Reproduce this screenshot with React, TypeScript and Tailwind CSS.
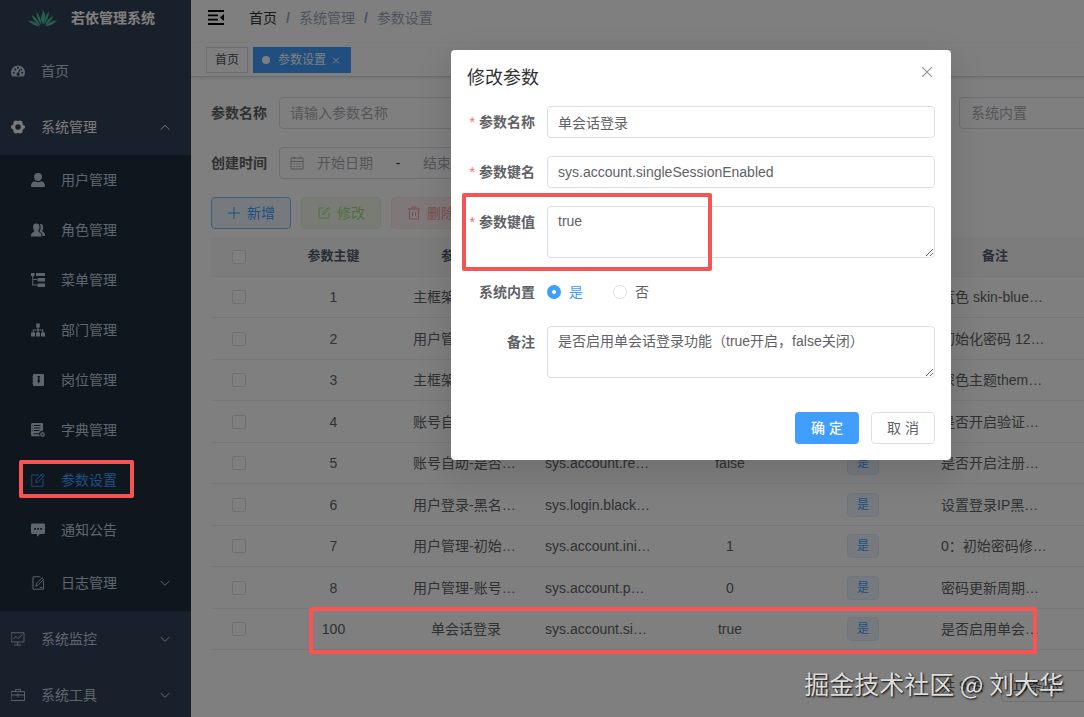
import type { ReactNode } from "react";

type MenuItem = {
  label: string;
  icon: ReactNode;
  active?: boolean;
  arrow?: boolean;
};

type ConfigRow = {
  id: number;
  name: string;
  configKey: string;
  value: string;
  remark: string;
};

function SolidIcon({ children }: { children: ReactNode }) {
  return (
    <svg viewBox="0 0 28 28" className="h-3.5 w-3.5 shrink-0" fill="currentColor" aria-hidden="true">
      {children}
    </svg>
  );
}

function LineIcon({ children }: { children: ReactNode }) {
  return (
    <svg
      viewBox="0 0 28 28"
      className="h-3.5 w-3.5 shrink-0"
      fill="none"
      stroke="currentColor"
      strokeWidth="1.800"
      strokeLinejoin="round"
      strokeLinecap="round"
      aria-hidden="true"
    >
      {children}
    </svg>
  );
}

const dashboardIcon = (
  <SolidIcon>
    <path
      fillRule="evenodd"
      d="M14 3c7.700 0 14 6.300 14 14 0 2.700-.7 5-2 7.200-.4.600-.8.800-1.500.8h-21c-.7 0-1.100-.2-1.500-.8C.7 22 0 19.700 0 17 0 9.300 6.300 3 14 3zM5.500 15.500a2 2 0 100 4 2 2 0 000-4zm3-6.500a2 2 0 100 4 2 2 0 000-4zM14 5.500a2 2 0 100 4 2 2 0 000-4zm8.500 10a2 2 0 100 4 2 2 0 000-4zM16.500 10l-2.200 7.200a3.200 3.200 0 101.900.6l2.200-7.200zM20.500 9.500a1.800 1.800 0 100 3.600 1.800 1.800 0 000-3.600z"
    />
  </SolidIcon>
);

const systemIcon = (
  <SolidIcon>
    <path
      fillRule="evenodd"
      d="M9.500 1c1.500-.8 2.500 1 4.500 1s3-1.800 4.500-1c2 .8 4.500 2 4.700 3.500.2 1.700-.5 3 .6 4.700 1 1.700 3.200 1.300 3.800 2.800.5 1.300.5 2.700 0 4-.6 1.500-2.800 1.100-3.800 2.800-1.100 1.700-.4 3-.6 4.700-.2 1.500-2.700 2.700-4.700 3.500-1.500.8-2.500-1-4.500-1s-3 1.800-4.500 1c-2-.8-4.500-2-4.700-3.500-.2-1.700.5-3-.6-4.700-1-1.700-3.200-1.300-3.800-2.800-.5-1.300-.5-2.700 0-4 .6-1.500 2.800-1.100 3.800-2.800 1.100-1.700.4-3 .6-4.700C5 3 7.500 1.800 9.500 1zM14 8.500a5.500 5.500 0 100 11 5.500 5.500 0 000-11z"
    />
  </SolidIcon>
);

const userIcon = (
  <SolidIcon>
    <path d="M14 0c5 0 8 3 8 7.500S18.500 16 14 16 6 12 6 7.500 9 0 14 0z" />
    <path d="M8 16.500c4 2.400 8 2.400 12 0 5 1 8 4.500 8 9 0 1.700-.8 2.500-2.500 2.500h-23C.8 28 0 27.200 0 25.500c0-4.500 3-8 8-9z" />
  </SolidIcon>
);

const peoplesIcon = (
  <SolidIcon>
    <path d="M10.500 1C15 1 17 4 17 8c0 3-1 5.500-2.500 7.500 0 2 1 2.500 3 3.500 2.500 1.200 3.500 3 3.500 8H0c0-5 1-6.800 3.500-8 2-1 3-1.500 3-3.500C5 13.500 4 11 4 8c0-4 2-7 6.500-7z" />
    <path d="M17 2.200c4.500-1 7.500 1.600 7.500 6.300 0 2.500-.8 4.600-2.200 6.500 0 1.800.8 2.400 2.200 3.200 2.500 1.300 3.500 3 3.500 7.800h-4.800c-.2-4.500-1.700-6.500-4.700-8-1.500-.7-1.700-1.200-1-2.500 1.500-2.300 2.200-4.800 2-7.500-.1-2.300-.9-4.300-2.500-5.800z" />
  </SolidIcon>
);

const treeTableIcon = (
  <SolidIcon>
    <path d="M0 0h7v6H4.500v6H12v2H4.500v9H12v2H2.500V6H0z" />
    <path d="M10 0h18v6H10zM13 10h15v7H13zM13 21h15v7H13z" />
  </SolidIcon>
);

const treeIcon = (
  <SolidIcon>
    <path d="M10.500 1h7v8H15v4h9.500v6H28v8h-8v-8h2.500v-4H15v4h3v8h-8v-8h3v-4H5.500v4H8v8H0v-8h3.500v-6H13V9h-2.500z" />
  </SolidIcon>
);

const postIcon = (
  <SolidIcon>
    <path
      fillRule="evenodd"
      d="M6 2h18c1.200 0 2 .8 2 2v20c0 1.200-.8 2-2 2H6c-1.200 0-2-.8-2-2v-3H2.500v-2H4v-4H2.500v-2H4V9H2.500V7H4V4c0-1.200.8-2 2-2zm7 4v3h1.500l-1.500 8 2.500 4 2.500-4-1.500-8H18V6z"
    />
  </SolidIcon>
);

const dictIcon = (
  <SolidIcon>
    <path
      fillRule="evenodd"
      d="M3 0h19c1.200 0 2 .8 2 2v13.500c-3.500-.8-7 1.500-7.800 5H5v2h11.200c.3 1.600 1 3 2 4H3c-1.700 0-3-1.300-3-3V3c0-1.700 1.300-3 3-3zm3 4v2h13V4zm0 5v2h13V9zm0 5v2h11v-2zM1.500 5v1.500h2V5zm0 5v1.500h2V10zm0 5v1.500h2V15z"
    />
    <path
      fillRule="evenodd"
      d="M23 17.500l1.500 1.500 2.200.3.300 2.200 1 1.500-1 1.500-.3 2.200-2.200.3L23 28l-1.500-1-2.200-.3-.3-2.200-1-1.500 1-1.500.3-2.200 2.200-.3zm0 3.500a2 2 0 100 4 2 2 0 000-4z"
    />
  </SolidIcon>
);

const editIcon = (
  <LineIcon>
    <path d="M15 4H1.500v22.500h22.500V13" />
    <path d="M9.500 18.500l1.200-5.500L23 1.200 27.200 5.500 15 17.200zM20 4l4.500 4.500" />
  </LineIcon>
);

const messageIcon = (
  <SolidIcon>
    <path
      fillRule="evenodd"
      d="M3 1h22c1.700 0 3 1.300 3 3v15c0 1.700-1.300 3-3 3h-7l-6 5.500V22H3c-1.700 0-3-1.300-3-3V4c0-1.700 1.300-3 3-3zm3.500 9v3.500H10V10zm6 0v3.500H16V10zm6 0v3.500H22V10z"
    />
  </SolidIcon>
);

const logIcon = (
  <LineIcon>
    <path d="M18 1.500H4v3M4 8v2.500M4 14v2.500M4 20v6.500h21V10M2.500 6.200h3M2.500 12.200h3M2.500 18.200h3" />
    <path d="M10 20l1.200-5.500L22 3.500l3.200 3L14.500 18zM18 23h4" />
  </LineIcon>
);

const monitorIcon = (
  <LineIcon>
    <path d="M1 1.500h25v18.500H1zM13.500 20v6M7 26h13" />
    <path d="M5 13l5-4 4 4 8-7" />
  </LineIcon>
);

const toolIcon = (
  <LineIcon>
    <path d="M1 7h26v18H1zM9 7V3h10v4M1 14h10M17 14h10M14 11.500v6M11.500 14h5" />
  </LineIcon>
);

const topMenu: MenuItem[] = [{ label: "首页", icon: dashboardIcon }];

const systemMenu: MenuItem[] = [
  { label: "用户管理", icon: userIcon },
  { label: "角色管理", icon: peoplesIcon },
  { label: "菜单管理", icon: treeTableIcon },
  { label: "部门管理", icon: treeIcon },
  { label: "岗位管理", icon: postIcon },
  { label: "字典管理", icon: dictIcon },
  { label: "参数设置", icon: editIcon, active: true },
  { label: "通知公告", icon: messageIcon },
];

const bottomMenu: MenuItem[] = [
  { label: "系统监控", icon: monitorIcon, arrow: true },
  { label: "系统工具", icon: toolIcon, arrow: true },
];

const rows: ConfigRow[] = [
  { id: 1, name: "主框架页-默认皮肤样式名称", configKey: "sys.index.skinName", value: "skin-blue", remark: "蓝色 skin-blue、绿色 skin-green" },
  { id: 2, name: "用户管理-账号初始密码", configKey: "sys.user.initPassword", value: "123456", remark: "初始化密码 123456" },
  { id: 3, name: "主框架页-侧边栏主题", configKey: "sys.index.sideTheme", value: "theme-dark", remark: "深色主题theme-dark" },
  { id: 4, name: "账号自助-验证码开关", configKey: "sys.account.captchaEnabled", value: "true", remark: "是否开启验证码功能" },
  { id: 5, name: "账号自助-是否开启用户注册功能", configKey: "sys.account.registerUser", value: "false", remark: "是否开启注册用户功能" },
  { id: 6, name: "用户登录-黑名单列表", configKey: "sys.login.blackIPList", value: "", remark: "设置登录IP黑名单限制" },
  { id: 7, name: "用户管理-初始密码修改策略", configKey: "sys.account.initPasswordModify", value: "1", remark: "0：初始密码修改策略关闭" },
  { id: 8, name: "用户管理-账号密码更新周期", configKey: "sys.account.passwordValidateDays", value: "0", remark: "密码更新周期（填写数字）" },
  { id: 100, name: "单会话登录", configKey: "sys.account.singleSessionEnabled", value: "true", remark: "是否启用单会话登录功能" },
];

function Arrow({ up = false }: { up?: boolean }) {
  return (
    <svg
      viewBox="0 0 12 12"
      className="ml-auto h-3 w-3 shrink-0"
      fill="none"
      stroke="currentColor"
      strokeWidth="1"
      strokeLinecap="round"
      aria-hidden="true"
    >
      <path d={up ? "M2 8.300 6 4.300l4 4" : "M2 4.300 6 8.300l4-4"} />
    </svg>
  );
}

function MenuLink({ item }: { item: MenuItem }) {
  return (
    <a href="#" className="flex h-14 items-center gap-4 pr-5 pl-[11px]">
      {item.icon}
      <span>{item.label}</span>
      {item.arrow && <Arrow />}
    </a>
  );
}

function Sidebar() {
  return (
    <aside className="w-[191px] shrink-0 bg-[#304156] text-sm text-[#bfcbd9]">
      <div className="flex h-[43px] items-center gap-3.5 pb-[7px] pl-7">
        <svg viewBox="0 0 58 36" className="h-[18px] w-[29px]" fill="#4dbb9b" aria-hidden="true">
          <path d="M28 0c8 8 8 19 2 31-5-10-5-15-2-20 2-4 2-7 0-11z" />
          <path d="M17 6c6 6 9 14 10 26C20 23 17 15 17 6zM42 5c-6 6-9 14-10 26C39 23 42 15 42 5z" />
          <path d="M7 12c8 4 14 11 18 22C16 28 10 21 7 12zM51 13c-8 4-13 10-17 20 9-5 14-11 17-20z" />
          <path d="M0 23c9 0 18 4 24 12C14 34 7 30 0 23zM58 23c-9 0-17 4-23 11 10 0 16-4 23-11z" />
        </svg>
        <h1 className="font-bold text-white">若依管理系统</h1>
      </div>
      <nav>
        {topMenu.map((item) => (
          <MenuLink key={item.label} item={item} />
        ))}
        <a href="#" className="flex h-14 items-center gap-4 pr-5 pl-[11px] text-[#f4f4f5]">
          {systemIcon}
          <span>系统管理</span>
          <Arrow up />
        </a>
        <div className="bg-[#1f2d3d]">
          {systemMenu.map((item) => (
            <a
              key={item.label}
              href="#"
              className={
                item.active
                  ? "relative flex h-[50px] items-center gap-4 pl-[31px] text-[#409eff]"
                  : "flex h-[50px] items-center gap-4 pl-[31px]"
              }
            >
              {item.icon}
              <span>{item.label}</span>
              {item.active && (
                <span className="absolute top-[5px] left-[19px] z-20 h-[38px] w-[115px] rounded-xs border-4 border-[#f95353]" />
              )}
            </a>
          ))}
          <a href="#" className="flex h-14 items-center gap-4 pr-5 pl-[31px]">
            {logIcon}
            <span>日志管理</span>
            <Arrow />
          </a>
        </div>
        {bottomMenu.map((item) => (
          <MenuLink key={item.label} item={item} />
        ))}
      </nav>
    </aside>
  );
}

function Navbar() {
  return (
    <header>
      <div className="flex h-[43px] items-center gap-6 pr-4 pb-[7px] pl-4 text-sm">
        <button type="button" aria-label="收起菜单" className="text-black">
          <svg viewBox="0 0 18 16" className="h-4 w-[18px]" fill="currentColor" aria-hidden="true">
            <path d="M1 0h16v2H1zM1 4.400h10v1.800H1zM1 8.800h10v1.800H1zM1 13h16v2H1zM17 4v7l-4-3.500z" />
          </svg>
        </button>
        <nav className="flex items-center text-[#97a8be]">
          <a href="#" className="text-[#303133]">首页</a>
          <span className="mx-[9px] font-bold">/</span>
          <span>系统管理</span>
          <span className="mx-[9px] font-bold">/</span>
          <span>参数设置</span>
        </nav>
      </div>
      <div className="flex h-[34px] gap-[5px] border-b border-[#d8dce5] pt-1 pl-[15px] text-xs shadow-[0_1px_3px_rgba(0,0,0,0.12)]">
        <a href="#" className="flex h-[26px] items-center border border-[#d8dce5] px-2 text-[#495060]">
          首页
        </a>
        <a href="#" className="flex h-[26px] items-center border border-[#409eff] bg-[#409eff] px-2 text-white">
          <span className="mr-2 h-2 w-2 rounded-full bg-white" />
          参数设置
          <svg viewBox="0 0 12 12" className="ml-1 h-3 w-3" stroke="currentColor" strokeWidth="1" aria-hidden="true">
            <path d="M3 3.500l6 6M9 3.500l-6 6" />
          </svg>
        </a>
      </div>
    </header>
  );
}

function QueryForm() {
  const label = "w-[68px] shrink-0 text-sm font-bold text-[#606266]";
  const field =
    "h-8 w-60 shrink-0 rounded border border-[#dcdfe6] bg-white px-2.5 text-sm text-[#606266] placeholder:text-[#a8abb2]";

  return (
    <form className="flex flex-col gap-[18px]">
      <div className="flex items-center">
        <label htmlFor="q-name" className={label}>参数名称</label>
        <input id="q-name" placeholder="请输入参数名称" className={field + " mr-8"} />
        <label htmlFor="q-key" className={label}>参数键名</label>
        <input id="q-key" placeholder="请输入参数键名" className={field + " mr-8"} />
        <label htmlFor="q-type" className={label}>系统内置</label>
        <select
          id="q-type"
          className="h-8 w-60 shrink-0 appearance-none rounded border border-[#dcdfe6] bg-white px-[11px] text-sm text-[#a8abb2]"
        >
          <option>系统内置</option>
        </select>
      </div>
      <div className="flex items-center">
        <label htmlFor="q-begin" className={label}>创建时间</label>
        <div className="flex h-8 w-60 shrink-0 items-center rounded border border-[#dcdfe6] bg-white pl-2.5 text-sm text-[#a8abb2]">
          <svg viewBox="0 0 28 28" className="h-3.5 w-3.5 shrink-0" fill="none" stroke="currentColor" strokeWidth="2" aria-hidden="true">
            <path d="M2 4h24v22H2zM2 11h24M8 1v5M20 1v5" />
            <path d="M7 16h3M12.500 16h3M18 16h3M7 21h3M12.500 21h3M18 21h3" />
          </svg>
          <input id="q-begin" placeholder="开始日期" className="w-[82px] text-center placeholder:text-[#a8abb2]" />
          <span className="w-6 text-center text-[#303133]">-</span>
          <input aria-label="结束日期" placeholder="结束日期" className="w-[82px] text-center placeholder:text-[#a8abb2]" />
        </div>
      </div>
    </form>
  );
}

function Toolbar() {
  const button = "flex h-8 w-20 items-center justify-center gap-1.5 rounded border text-sm";

  return (
    <div className="mt-[18px] mb-2 flex gap-2.5">
      <button type="button" className={button + " border-[#79bbff] bg-[#ecf5ff] text-[#409eff]"}>
        <svg viewBox="0 0 14 14" className="h-3.5 w-3.5" stroke="currentColor" strokeWidth="1" aria-hidden="true">
          <path d="M1 7h12M7 1v12" />
        </svg>
        新增
      </button>
      <button type="button" disabled className={button + " border-[#e1f3d8] bg-[#f0f9eb] text-[#a4da89]"}>
        <svg viewBox="0 0 28 28" className="h-3.5 w-3.5" fill="none" stroke="currentColor" strokeWidth="2" aria-hidden="true">
          <path d="M15 4H4v20h20V13M11 17l1-4L23 3l2 2-10 11z" />
        </svg>
        修改
      </button>
      <button type="button" disabled className={button + " border-[#fde2e2] bg-[#fef0f0] text-[#f79e9e]"}>
        <svg viewBox="0 0 28 28" className="h-3.5 w-3.5" fill="none" stroke="currentColor" strokeWidth="2" aria-hidden="true">
          <path d="M2 6h24M5 6v20h18V6M10 6V2h8v4M11 12v8M17 12v8" />
        </svg>
        删除
      </button>
    </div>
  );
}

function ConfigTable() {
  const checkbox = "mx-auto block h-3.5 w-3.5 appearance-none rounded-xs border border-[#dcdfe6] bg-white";
  const cell = "truncate pr-3.5 pl-3";

  return (
    <table className="w-full table-fixed border-separate border-spacing-0 text-center text-sm text-[#606266]">
      <colgroup>
        <col className="w-[55px]" />
        <col className="w-[135px]" />
        <col className="w-[132px]" />
        <col className="w-[132px]" />
        <col className="w-[132px]" />
        <col className="w-[132px]" />
        <col className="w-[132px]" />
        <col />
      </colgroup>
      <thead>
        <tr className="h-10 text-[13px] text-[#515a6e] *:border-b *:border-[#ebeef5] *:bg-[#f8f8f9]">
          <th>
            <input type="checkbox" aria-label="全选" className={checkbox} />
          </th>
          <th>参数主键</th>
          <th>参数名称</th>
          <th>参数键名</th>
          <th>参数键值</th>
          <th>系统内置</th>
          <th>备注</th>
          <td />
        </tr>
      </thead>
      <tbody>
        {rows.map((row) => (
          <tr key={row.id} className="relative h-[41px] *:border-b *:border-[#ebeef5] even:h-[42px]">
            <td>
              <input type="checkbox" aria-label={"选择 " + row.id} className={checkbox} />
              {row.id === 100 && (
                <span className="absolute -top-0.5 left-[98px] z-20 h-[47px] w-[728px] rounded-xs border-4 border-[#f95353]" />
              )}
            </td>
            <td>{row.id}</td>
            <td className={cell}>{row.name}</td>
            <td className={cell}>{row.configKey}</td>
            <td className={cell}>{row.value}</td>
            <td>
              <span className="mx-auto flex h-6 w-8 items-center justify-center rounded border border-[#d9ecff] bg-[#ecf5ff] text-xs text-[#409eff]">
                是
              </span>
            </td>
            <td className={cell}>{row.remark}</td>
            <td />
          </tr>
        ))}
      </tbody>
    </table>
  );
}

function EditDialog() {
  const label = "w-20 shrink-0 pr-3 text-right leading-8 font-bold";
  const star = <span className="mr-1 font-normal text-[#f56c6c]">*</span>;
  const field = "min-w-0 flex-1 rounded border border-[#dcdfe6] bg-white px-2.5";
  const radio =
    "mr-2 h-3.5 w-3.5 appearance-none rounded-full border border-[#dcdfe6] checked:border-5 checked:border-[#409eff]";

  return (
    <div
      role="dialog"
      aria-labelledby="dialog-title"
      className="w-[500px] shrink-0 rounded bg-white p-4 text-sm text-[#606266] shadow-[0_12px_32px_4px_rgba(0,0,0,0.12)]"
    >
      <div className="flex items-start justify-between pb-4">
        <h2 id="dialog-title" className="text-lg leading-6 text-[#303133]">修改参数</h2>
        <button type="button" aria-label="关闭" className="text-[#909399]">
          <svg viewBox="0 0 16 16" className="h-4 w-4" stroke="currentColor" strokeWidth="1.200" aria-hidden="true">
            <path d="M3.200 1.200l9.600 9.600M12.800 1.200L3.200 10.800" />
          </svg>
        </button>
      </div>
      <form className="flex flex-col gap-[18px]">
        <div className="flex">
          <label htmlFor="f-name" className={label}>{star}参数名称</label>
          <input id="f-name" defaultValue="单会话登录" className={field + " h-8"} />
        </div>
        <div className="flex">
          <label htmlFor="f-key" className={label}>{star}参数键名</label>
          <input id="f-key" defaultValue="sys.account.singleSessionEnabled" className={field + " h-8"} />
        </div>
        <div className="relative flex">
          <label htmlFor="f-value" className={label}>{star}参数键值</label>
          <textarea id="f-value" defaultValue="true" className={field + " h-[52px] resize-y py-1 leading-5"} />
          <span className="pointer-events-none absolute -top-[13px] -left-[5px] h-[78px] w-[250px] rounded-xs border-4 border-[#f25555]" />
        </div>
        <div className="flex">
          <span className={label}>系统内置</span>
          <div className="flex items-center gap-[30px]">
            <label className="flex items-center text-[#409eff]">
              <input type="radio" name="builtin" defaultChecked className={radio} />
              是
            </label>
            <label className="flex items-center">
              <input type="radio" name="builtin" className={radio} />
              否
            </label>
          </div>
        </div>
        <div className="flex">
          <label htmlFor="f-remark" className={label}>备注</label>
          <textarea
            id="f-remark"
            defaultValue="是否启用单会话登录功能（true开启，false关闭）"
            className={field + " h-[52px] resize-y py-1 leading-5"}
          />
        </div>
      </form>
      <div className="mt-[34px] flex justify-end gap-3">
        <button type="button" className="h-8 w-16 rounded bg-[#409eff] font-medium text-white">确 定</button>
        <button type="button" className="h-8 w-16 rounded border border-[#dcdfe6] bg-white">取 消</button>
      </div>
    </div>
  );
}

export default function App() {
  return (
    <div className="relative flex h-screen overflow-hidden bg-white font-['Liberation_Sans','Noto_Sans_CJK_SC',sans-serif]">
      <Sidebar />
      <div className="min-w-0 flex-1 overflow-hidden">
        <Navbar />
        <main className="pt-5 pl-5">
          <QueryForm />
          <Toolbar />
          <ConfigTable />
          <div className="mt-5 flex items-center gap-4 pl-[730px] text-sm text-[#606266]">
            <span className="shrink-0">共 9 条</span>
            <select
              aria-label="每页条数"
              className="h-8 w-32 shrink-0 appearance-none rounded border border-[#dcdfe6] bg-white px-[11px]"
            >
              <option>10条/页</option>
            </select>
          </div>
        </main>
      </div>

      <div className="absolute inset-0 z-10 flex items-start justify-end bg-black/50 pt-[50px] pr-[133px]">
        <EditDialog />
      </div>
      <p className="absolute right-5 bottom-4 z-20 font-['Noto_Sans_CJK_SC',sans-serif] text-[25px] leading-9 text-[#dcdcdc] [text-shadow:1px_1px_2px_#000]">
        掘金技术社区 @ 刘大华
      </p>
    </div>
  );
}
